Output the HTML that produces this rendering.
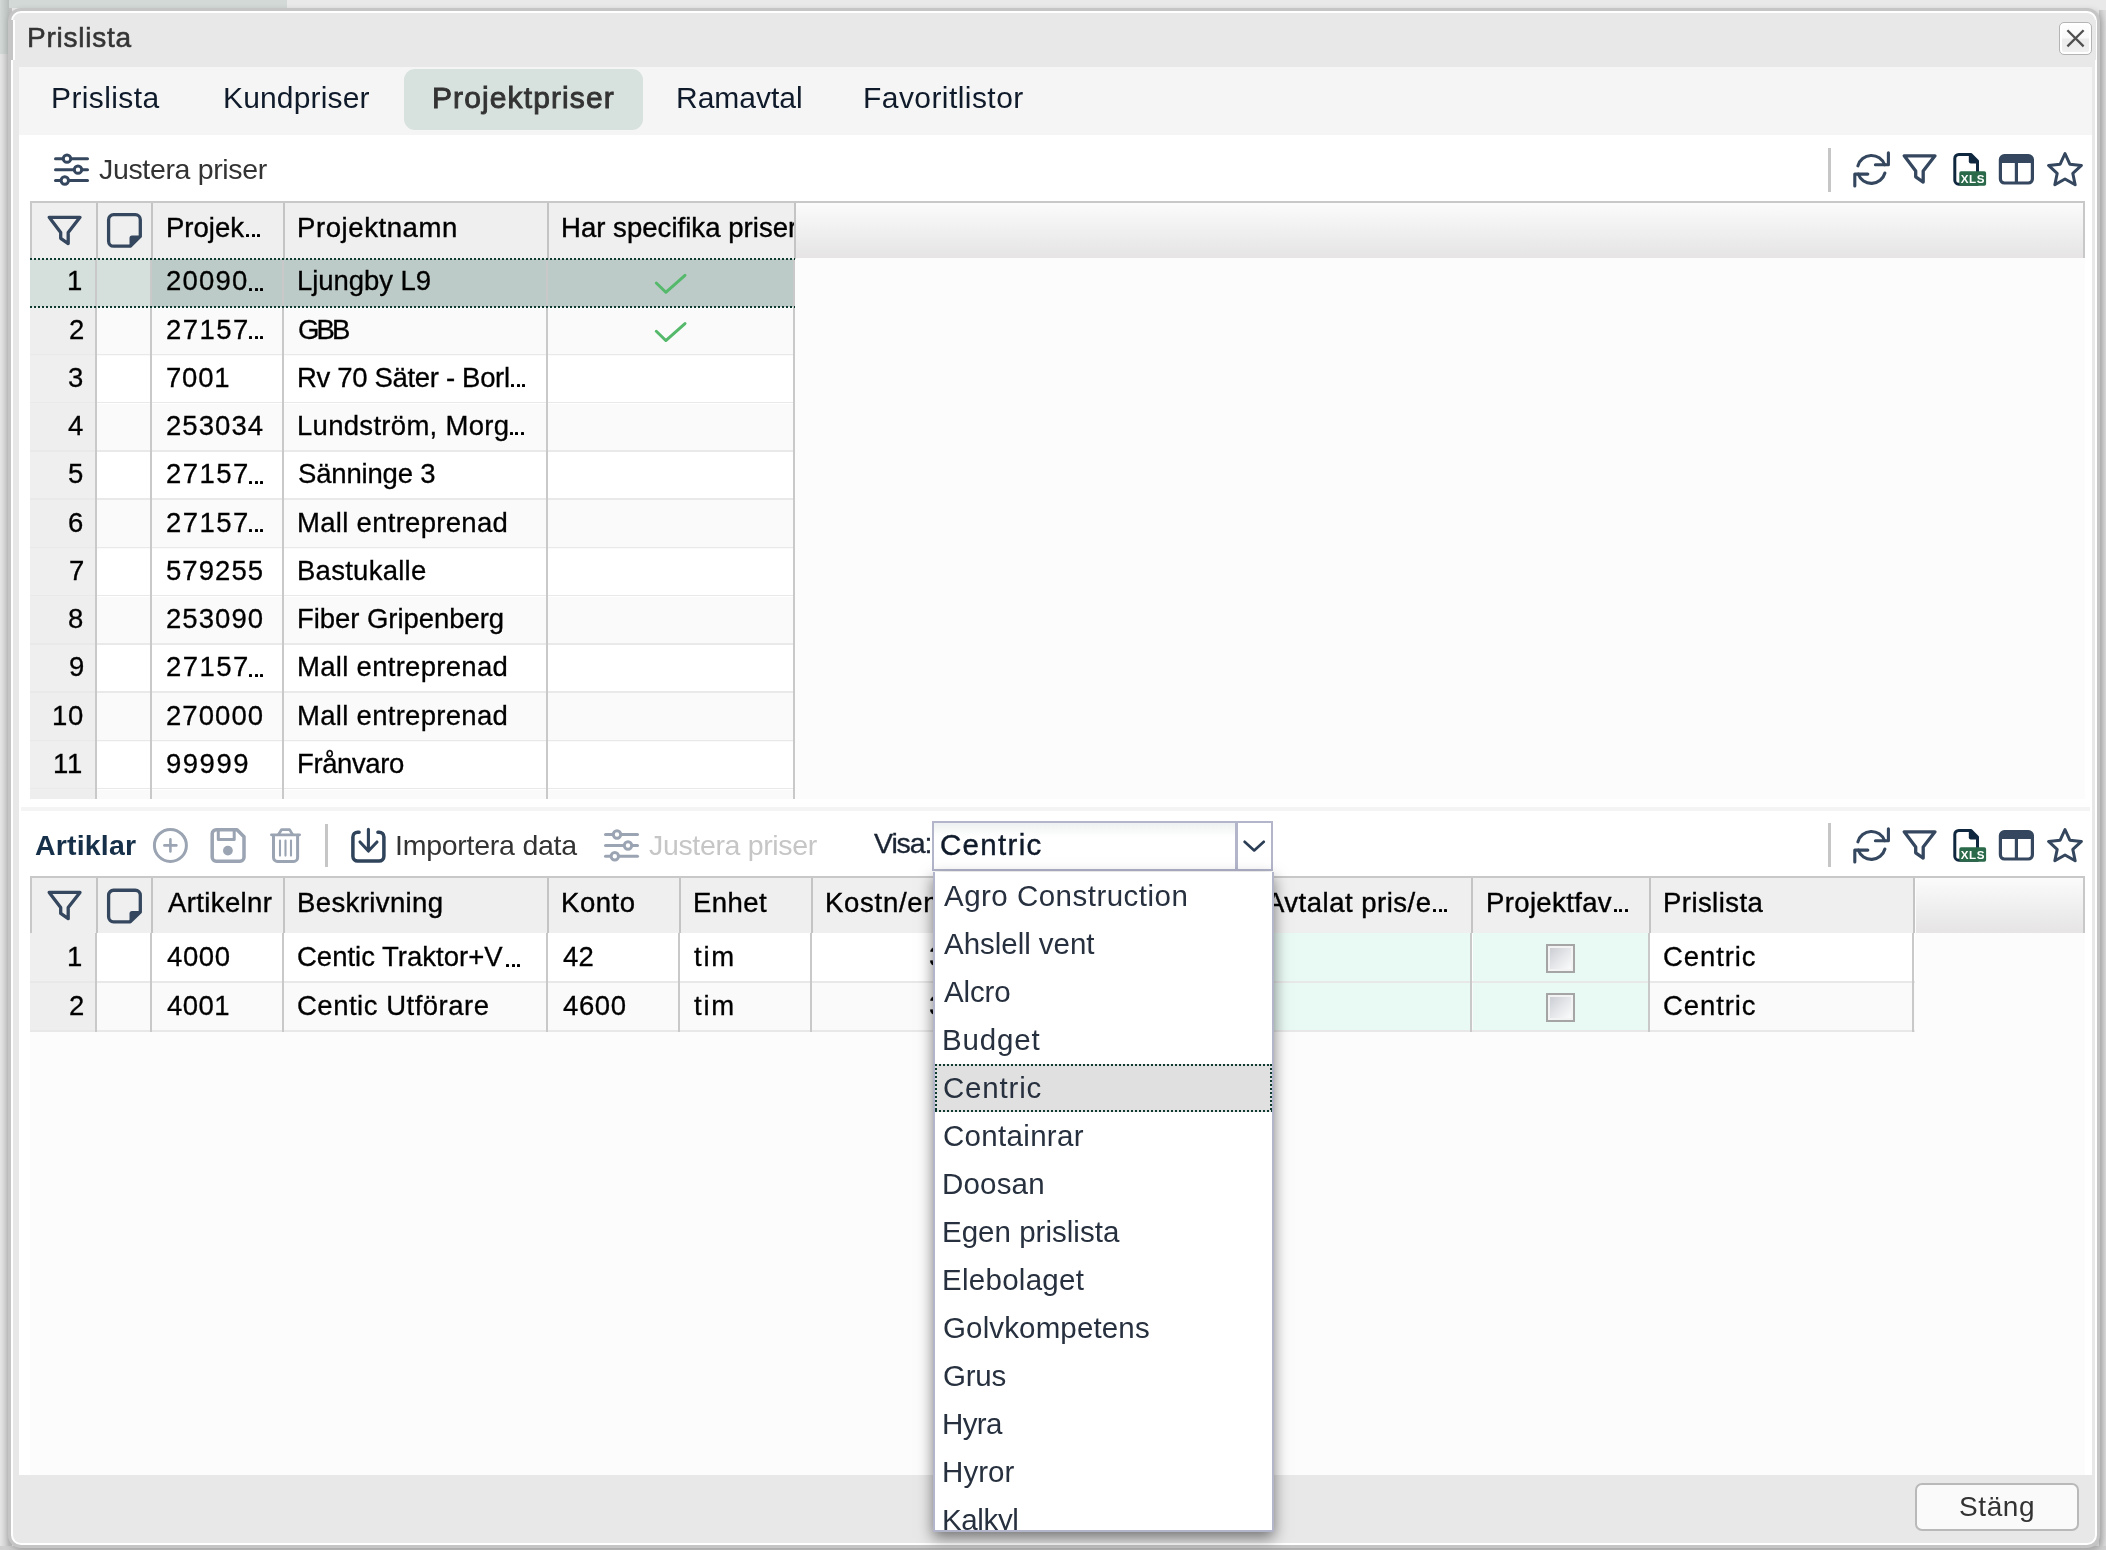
<!DOCTYPE html>
<html><head><meta charset="utf-8"><title>Prislista</title>
<style>
html,body{margin:0;padding:0}
body{width:2106px;height:1550px;position:relative;overflow:hidden;background:#e9e9e9;font-family:"Liberation Sans",sans-serif;}
.b{position:absolute;box-sizing:border-box}
.c{position:absolute;overflow:hidden}
.t{position:absolute;white-space:pre;font-family:"Liberation Sans",sans-serif;will-change:transform}
svg{position:absolute;left:0;top:0;overflow:visible}
</style></head><body>

<div class="b" style="left:0px;top:0px;width:287px;height:8px;background:#d3d9d7;"></div>
<div class="b" style="left:0px;top:8px;width:12px;height:1542px;background:linear-gradient(90deg,#e6e6e6 0%,#d2d2d2 45%,#bfbfbf 75%,#c4c4c4 100%);"></div>
<div class="b" style="left:0px;top:0px;width:9px;height:54px;background:linear-gradient(90deg,#d3d9d7,#b8bebc);"></div>
<div class="b" style="left:2099px;top:10px;width:7px;height:1538px;background:linear-gradient(90deg,#c8c8c8,#dedede);"></div>
<div class="b" style="left:0px;top:1546px;width:2106px;height:4px;background:#cfcfcf;"></div>
<div class="b" style="left:11px;top:11px;width:2086px;height:1534px;background:#e8e8e8;border:2px solid #fff;border-radius:10px;box-shadow:0 0 0 3px #c5c5c5,2px 3px 7px 3px rgba(0,0,0,.22);"></div>
<div class="b" style="left:19px;top:67px;width:2073px;height:1407.5px;background:#fff;"></div>
<div class="b" style="left:19px;top:67px;width:2073px;height:67.5px;background:#f5f5f5;"></div>
<div class="b" style="left:11px;top:20px;width:2px;height:40px;background:#c5c5c5;"></div>
<div class="b" style="left:13px;top:20px;width:2px;height:40px;background:#fff;"></div>
<div class="b" style="left:2095px;top:20px;width:1.2px;height:40px;background:#e8e8e8;"></div>
<div class="b" style="left:404px;top:69px;width:239px;height:61px;background:#d7e1de;border-radius:11px;"></div>
<span class="t" style="left:27.00px;top:24.20px;font-size:28px;line-height:28px;color:#333;letter-spacing:0.770px;-webkit-text-stroke:0.55px #333;">Prislista</span>
<div class="b" style="left:2059px;top:22px;width:33px;height:33px;background:linear-gradient(180deg,#fdfdfd 0%,#fafafa 48%,#ececec 52%,#f0f0f0 100%);border:1.5px solid #b4b4b4;border-radius:5px;box-shadow:inset 0 0 0 2px #fff;"></div>
<span class="t" style="left:51.00px;top:83.36px;font-size:30px;line-height:30px;color:#0f1a2a;letter-spacing:0.396px;">Prislista</span>
<span class="t" style="left:223.00px;top:83.36px;font-size:30px;line-height:30px;color:#0f1a2a;letter-spacing:0.157px;">Kundpriser</span>
<span class="t" style="left:431.75px;top:83.20px;font-size:30px;line-height:30px;color:#333;letter-spacing:1.113px;-webkit-text-stroke:0.9px #333;">Projektpriser</span>
<span class="t" style="left:676.00px;top:83.36px;font-size:30px;line-height:30px;color:#0f1a2a;letter-spacing:-0.006px;">Ramavtal</span>
<span class="t" style="left:862.75px;top:83.36px;font-size:30px;line-height:30px;color:#0f1a2a;letter-spacing:0.435px;">Favoritlistor</span>
<span class="t" style="left:98.75px;top:155.37px;font-size:28.5px;line-height:28.5px;color:#333;letter-spacing:-0.339px;">Justera priser</span>
<div class="b" style="left:1828px;top:148px;width:3px;height:43.5px;background:#c6c6c6;"></div>
<div class="b" style="left:30px;top:201px;width:2055px;height:598px;background:#fcfcfc;"></div>
<div class="b" style="left:30px;top:201px;width:2055px;height:2px;background:#c8c8c8;"></div>
<div class="b" style="left:30px;top:203px;width:2px;height:55px;background:#c8c8c8;"></div>
<div class="b" style="left:32px;top:203px;width:763px;height:55.5px;background:#efefef;"></div>
<div class="b" style="left:796px;top:203px;width:1287px;height:54.8px;background:linear-gradient(180deg,#fbfbfb 0%,#f1f1f1 45%,#e6e4e5 100%);"></div>
<div class="b" style="left:2083px;top:203px;width:2px;height:54.8px;background:#c8c8c8;"></div>
<div class="b" style="left:96px;top:203px;width:2px;height:56px;background:#c4c4c4;"></div>
<div class="b" style="left:151px;top:203px;width:2px;height:56px;background:#c4c4c4;"></div>
<div class="b" style="left:283px;top:203px;width:2px;height:56px;background:#c4c4c4;"></div>
<div class="b" style="left:547px;top:203px;width:2px;height:56px;background:#c4c4c4;"></div>
<div class="b" style="left:794px;top:203px;width:2px;height:56px;background:#c4c4c4;"></div>
<span class="t" style="left:165.50px;top:213.72px;font-size:27.5px;line-height:27.5px;color:#000;letter-spacing:0.000px;-webkit-text-stroke:0.4px #000;">Projek</span>
<div class="b" style="left:246.10px;top:233.90px;width:3px;height:3.1px;background:#000;border-radius:.6px"></div>
<div class="b" style="left:251.55px;top:233.90px;width:3px;height:3.1px;background:#000;border-radius:.6px"></div>
<div class="b" style="left:257.00px;top:233.90px;width:3px;height:3.1px;background:#000;border-radius:.6px"></div>
<span class="t" style="left:297.00px;top:213.72px;font-size:27.5px;line-height:27.5px;color:#000;letter-spacing:0.592px;-webkit-text-stroke:0.4px #000;">Projektnamn</span>
<div class="c" style="left:552.00px;top:207.72px;width:242.00px;height:39.50px"><span class="t" style="left:561.00px;top:213.72px;font-size:27.5px;line-height:27.5px;color:#000;letter-spacing:0.043px;-webkit-text-stroke:0.4px #000;left:9.00px;top:6px">Har specifika priser</span></div>
<div class="b" style="left:30px;top:259.0px;width:121px;height:48.25px;background:#d5e0dc;"></div>
<div class="b" style="left:151px;top:259.0px;width:644px;height:48.25px;background:#bccbc7;"></div>
<span class="t" style="left:66.60px;top:267.47px;font-size:27.5px;line-height:27.5px;color:#000;letter-spacing:0.000px;-webkit-text-stroke:0.3px #000;">1</span>
<span class="t" style="left:165.75px;top:267.47px;font-size:27.5px;line-height:27.5px;color:#000;letter-spacing:1.193px;-webkit-text-stroke:0.3px #000;">20090</span>
<div class="b" style="left:249.10px;top:287.65px;width:3px;height:3.1px;background:#000;border-radius:.6px"></div>
<div class="b" style="left:254.55px;top:287.65px;width:3px;height:3.1px;background:#000;border-radius:.6px"></div>
<div class="b" style="left:260.00px;top:287.65px;width:3px;height:3.1px;background:#000;border-radius:.6px"></div>
<span class="t" style="left:296.75px;top:267.47px;font-size:27.5px;line-height:27.5px;color:#000;letter-spacing:-0.057px;-webkit-text-stroke:0.3px #000;">Ljungby L9</span>
<div class="b" style="left:30px;top:307.25px;width:66px;height:48.25px;background:#eeeeee;"></div>
<div class="b" style="left:96px;top:307.25px;width:699px;height:48.25px;background:#fafafa;"></div>
<div class="b" style="left:30px;top:353.5px;width:765px;height:1.7px;background:#e9e9e9;"></div>
<span class="t" style="left:68.60px;top:315.72px;font-size:27.5px;line-height:27.5px;color:#000;letter-spacing:0.000px;-webkit-text-stroke:0.3px #000;">2</span>
<span class="t" style="left:165.75px;top:315.72px;font-size:27.5px;line-height:27.5px;color:#000;letter-spacing:1.443px;-webkit-text-stroke:0.3px #000;">27157</span>
<div class="b" style="left:249.10px;top:335.90px;width:3px;height:3.1px;background:#000;border-radius:.6px"></div>
<div class="b" style="left:254.55px;top:335.90px;width:3px;height:3.1px;background:#000;border-radius:.6px"></div>
<div class="b" style="left:260.00px;top:335.90px;width:3px;height:3.1px;background:#000;border-radius:.6px"></div>
<span class="t" style="left:297.75px;top:315.72px;font-size:27.5px;line-height:27.5px;color:#000;letter-spacing:-2.866px;-webkit-text-stroke:0.3px #000;">GBB</span>
<div class="b" style="left:30px;top:355.5px;width:66px;height:48.25px;background:#efefef;"></div>
<div class="b" style="left:96px;top:355.5px;width:699px;height:48.25px;background:#ffffff;"></div>
<div class="b" style="left:30px;top:401.75px;width:765px;height:1.7px;background:#e9e9e9;"></div>
<span class="t" style="left:67.60px;top:363.97px;font-size:27.5px;line-height:27.5px;color:#000;letter-spacing:0.000px;-webkit-text-stroke:0.3px #000;">3</span>
<span class="t" style="left:165.75px;top:363.97px;font-size:27.5px;line-height:27.5px;color:#000;letter-spacing:0.789px;-webkit-text-stroke:0.3px #000;">7001</span>
<span class="t" style="left:296.75px;top:363.97px;font-size:27.5px;line-height:27.5px;color:#000;letter-spacing:-0.323px;-webkit-text-stroke:0.3px #000;">Rv 70 Säter - Borl</span>
<div class="b" style="left:511.10px;top:384.15px;width:3px;height:3.1px;background:#000;border-radius:.6px"></div>
<div class="b" style="left:516.55px;top:384.15px;width:3px;height:3.1px;background:#000;border-radius:.6px"></div>
<div class="b" style="left:522.00px;top:384.15px;width:3px;height:3.1px;background:#000;border-radius:.6px"></div>
<div class="b" style="left:30px;top:403.75px;width:66px;height:48.25px;background:#eeeeee;"></div>
<div class="b" style="left:96px;top:403.75px;width:699px;height:48.25px;background:#fafafa;"></div>
<div class="b" style="left:30px;top:450.0px;width:765px;height:1.7px;background:#e9e9e9;"></div>
<span class="t" style="left:67.60px;top:412.22px;font-size:27.5px;line-height:27.5px;color:#000;letter-spacing:0.000px;-webkit-text-stroke:0.3px #000;">4</span>
<span class="t" style="left:165.75px;top:412.22px;font-size:27.5px;line-height:27.5px;color:#000;letter-spacing:1.056px;-webkit-text-stroke:0.3px #000;">253034</span>
<span class="t" style="left:296.75px;top:412.22px;font-size:27.5px;line-height:27.5px;color:#000;letter-spacing:0.295px;-webkit-text-stroke:0.3px #000;">Lundström, Morg</span>
<div class="b" style="left:509.85px;top:432.40px;width:3px;height:3.1px;background:#000;border-radius:.6px"></div>
<div class="b" style="left:515.30px;top:432.40px;width:3px;height:3.1px;background:#000;border-radius:.6px"></div>
<div class="b" style="left:520.75px;top:432.40px;width:3px;height:3.1px;background:#000;border-radius:.6px"></div>
<div class="b" style="left:30px;top:452.0px;width:66px;height:48.25px;background:#efefef;"></div>
<div class="b" style="left:96px;top:452.0px;width:699px;height:48.25px;background:#ffffff;"></div>
<div class="b" style="left:30px;top:498.25px;width:765px;height:1.7px;background:#e9e9e9;"></div>
<span class="t" style="left:67.60px;top:460.47px;font-size:27.5px;line-height:27.5px;color:#000;letter-spacing:0.000px;-webkit-text-stroke:0.3px #000;">5</span>
<span class="t" style="left:165.75px;top:460.47px;font-size:27.5px;line-height:27.5px;color:#000;letter-spacing:1.443px;-webkit-text-stroke:0.3px #000;">27157</span>
<div class="b" style="left:249.10px;top:480.65px;width:3px;height:3.1px;background:#000;border-radius:.6px"></div>
<div class="b" style="left:254.55px;top:480.65px;width:3px;height:3.1px;background:#000;border-radius:.6px"></div>
<div class="b" style="left:260.00px;top:480.65px;width:3px;height:3.1px;background:#000;border-radius:.6px"></div>
<span class="t" style="left:297.75px;top:460.47px;font-size:27.5px;line-height:27.5px;color:#000;letter-spacing:-0.179px;-webkit-text-stroke:0.3px #000;">Sänninge 3</span>
<div class="b" style="left:30px;top:500.25px;width:66px;height:48.25px;background:#eeeeee;"></div>
<div class="b" style="left:96px;top:500.25px;width:699px;height:48.25px;background:#fafafa;"></div>
<div class="b" style="left:30px;top:546.5px;width:765px;height:1.7px;background:#e9e9e9;"></div>
<span class="t" style="left:67.60px;top:508.72px;font-size:27.5px;line-height:27.5px;color:#000;letter-spacing:0.000px;-webkit-text-stroke:0.3px #000;">6</span>
<span class="t" style="left:165.75px;top:508.72px;font-size:27.5px;line-height:27.5px;color:#000;letter-spacing:1.443px;-webkit-text-stroke:0.3px #000;">27157</span>
<div class="b" style="left:249.10px;top:528.90px;width:3px;height:3.1px;background:#000;border-radius:.6px"></div>
<div class="b" style="left:254.55px;top:528.90px;width:3px;height:3.1px;background:#000;border-radius:.6px"></div>
<div class="b" style="left:260.00px;top:528.90px;width:3px;height:3.1px;background:#000;border-radius:.6px"></div>
<span class="t" style="left:296.75px;top:508.72px;font-size:27.5px;line-height:27.5px;color:#000;letter-spacing:0.295px;-webkit-text-stroke:0.3px #000;">Mall entreprenad</span>
<div class="b" style="left:30px;top:548.5px;width:66px;height:48.25px;background:#efefef;"></div>
<div class="b" style="left:96px;top:548.5px;width:699px;height:48.25px;background:#ffffff;"></div>
<div class="b" style="left:30px;top:594.75px;width:765px;height:1.7px;background:#e9e9e9;"></div>
<span class="t" style="left:68.60px;top:556.97px;font-size:27.5px;line-height:27.5px;color:#000;letter-spacing:0.000px;-webkit-text-stroke:0.3px #000;">7</span>
<span class="t" style="left:165.75px;top:556.97px;font-size:27.5px;line-height:27.5px;color:#000;letter-spacing:1.056px;-webkit-text-stroke:0.3px #000;">579255</span>
<span class="t" style="left:296.75px;top:556.97px;font-size:27.5px;line-height:27.5px;color:#000;letter-spacing:0.268px;-webkit-text-stroke:0.3px #000;">Bastukalle</span>
<div class="b" style="left:30px;top:596.75px;width:66px;height:48.25px;background:#eeeeee;"></div>
<div class="b" style="left:96px;top:596.75px;width:699px;height:48.25px;background:#fafafa;"></div>
<div class="b" style="left:30px;top:643.0px;width:765px;height:1.7px;background:#e9e9e9;"></div>
<span class="t" style="left:67.60px;top:605.22px;font-size:27.5px;line-height:27.5px;color:#000;letter-spacing:0.000px;-webkit-text-stroke:0.3px #000;">8</span>
<span class="t" style="left:165.75px;top:605.22px;font-size:27.5px;line-height:27.5px;color:#000;letter-spacing:1.056px;-webkit-text-stroke:0.3px #000;">253090</span>
<span class="t" style="left:296.75px;top:605.22px;font-size:27.5px;line-height:27.5px;color:#000;letter-spacing:-0.055px;-webkit-text-stroke:0.3px #000;">Fiber Gripenberg</span>
<div class="b" style="left:30px;top:645.0px;width:66px;height:48.25px;background:#efefef;"></div>
<div class="b" style="left:96px;top:645.0px;width:699px;height:48.25px;background:#ffffff;"></div>
<div class="b" style="left:30px;top:691.25px;width:765px;height:1.7px;background:#e9e9e9;"></div>
<span class="t" style="left:68.60px;top:653.47px;font-size:27.5px;line-height:27.5px;color:#000;letter-spacing:0.000px;-webkit-text-stroke:0.3px #000;">9</span>
<span class="t" style="left:165.75px;top:653.47px;font-size:27.5px;line-height:27.5px;color:#000;letter-spacing:1.443px;-webkit-text-stroke:0.3px #000;">27157</span>
<div class="b" style="left:249.10px;top:673.65px;width:3px;height:3.1px;background:#000;border-radius:.6px"></div>
<div class="b" style="left:254.55px;top:673.65px;width:3px;height:3.1px;background:#000;border-radius:.6px"></div>
<div class="b" style="left:260.00px;top:673.65px;width:3px;height:3.1px;background:#000;border-radius:.6px"></div>
<span class="t" style="left:296.75px;top:653.47px;font-size:27.5px;line-height:27.5px;color:#000;letter-spacing:0.295px;-webkit-text-stroke:0.3px #000;">Mall entreprenad</span>
<div class="b" style="left:30px;top:693.25px;width:66px;height:48.25px;background:#eeeeee;"></div>
<div class="b" style="left:96px;top:693.25px;width:699px;height:48.25px;background:#fafafa;"></div>
<div class="b" style="left:30px;top:739.5px;width:765px;height:1.7px;background:#e9e9e9;"></div>
<span class="t" style="left:51.61px;top:701.72px;font-size:27.5px;line-height:27.5px;color:#000;letter-spacing:0.700px;-webkit-text-stroke:0.3px #000;">10</span>
<span class="t" style="left:165.75px;top:701.72px;font-size:27.5px;line-height:27.5px;color:#000;letter-spacing:1.056px;-webkit-text-stroke:0.3px #000;">270000</span>
<span class="t" style="left:296.75px;top:701.72px;font-size:27.5px;line-height:27.5px;color:#000;letter-spacing:0.295px;-webkit-text-stroke:0.3px #000;">Mall entreprenad</span>
<div class="b" style="left:30px;top:741.5px;width:66px;height:48.25px;background:#efefef;"></div>
<div class="b" style="left:96px;top:741.5px;width:699px;height:48.25px;background:#ffffff;"></div>
<div class="b" style="left:30px;top:787.75px;width:765px;height:1.7px;background:#e9e9e9;"></div>
<span class="t" style="left:52.65px;top:749.97px;font-size:27.5px;line-height:27.5px;color:#000;letter-spacing:0.700px;-webkit-text-stroke:0.3px #000;">11</span>
<span class="t" style="left:165.75px;top:749.97px;font-size:27.5px;line-height:27.5px;color:#000;letter-spacing:1.518px;-webkit-text-stroke:0.3px #000;">99999</span>
<span class="t" style="left:296.75px;top:749.97px;font-size:27.5px;line-height:27.5px;color:#000;letter-spacing:-0.392px;-webkit-text-stroke:0.3px #000;">Frånvaro</span>
<div class="b" style="left:30px;top:789.75px;width:66px;height:9.25px;background:#eeeeee;"></div>
<div class="b" style="left:96px;top:789.75px;width:699px;height:9.25px;background:#fafafa;"></div>
<div class="b" style="left:95px;top:260px;width:2px;height:539px;background:#c9c9c9;"></div>
<div class="b" style="left:150px;top:260px;width:2px;height:539px;background:#c9c9c9;"></div>
<div class="b" style="left:282px;top:260px;width:2px;height:539px;background:#c9c9c9;"></div>
<div class="b" style="left:546px;top:260px;width:2px;height:539px;background:#c9c9c9;"></div>
<div class="b" style="left:793px;top:260px;width:2px;height:539px;background:#c9c9c9;"></div>
<div class="b" style="left:30px;top:258px;width:765px;height:2px;background:repeating-linear-gradient(90deg,#0f3a30 0,#0f3a30 2px,transparent 2px,transparent 4px);"></div>
<div class="b" style="left:30px;top:306px;width:765px;height:2px;background:repeating-linear-gradient(90deg,#0f3a30 0,#0f3a30 2px,transparent 2px,transparent 4px);"></div>
<div class="b" style="left:21px;top:806.5px;width:2069px;height:4px;background:#f4f4f4;"></div>
<span class="t" style="left:35.00px;top:831.37px;font-size:28.5px;line-height:28.5px;color:#16304a;letter-spacing:0.186px;font-weight:bold;">Artiklar</span>
<div class="b" style="left:325px;top:823.5px;width:3px;height:43.5px;background:#c6c6c6;"></div>
<span class="t" style="left:395.00px;top:830.87px;font-size:28.5px;line-height:28.5px;color:#333;letter-spacing:-0.250px;">Importera data</span>
<span class="t" style="left:648.50px;top:830.87px;font-size:28.5px;line-height:28.5px;color:#c6c6c6;letter-spacing:-0.339px;">Justera priser</span>
<span class="t" style="left:874.00px;top:829.37px;font-size:28.5px;line-height:28.5px;color:#1a2433;letter-spacing:-1.107px;-webkit-text-stroke:0.35px #1a2433;">Visa:</span>
<div class="b" style="left:1828px;top:823px;width:3px;height:43.5px;background:#c6c6c6;"></div>
<div class="b" style="left:30px;top:876px;width:2055px;height:598.5px;background:#fcfcfc;"></div>
<div class="b" style="left:30px;top:876px;width:2055px;height:2px;background:#c8c8c8;"></div>
<div class="b" style="left:30px;top:878px;width:2px;height:55px;background:#c8c8c8;"></div>
<div class="b" style="left:32px;top:878px;width:1882px;height:55px;background:#efefef;"></div>
<div class="b" style="left:1915.5px;top:878px;width:169.5px;height:55px;background:linear-gradient(180deg,#fbfbfb 0%,#f1f1f1 45%,#e6e4e5 100%);"></div>
<div class="b" style="left:2083px;top:878px;width:2px;height:55px;background:#c8c8c8;"></div>
<div class="b" style="left:96px;top:878px;width:2px;height:55px;background:#c4c4c4;"></div>
<div class="b" style="left:151px;top:878px;width:2px;height:55px;background:#c4c4c4;"></div>
<div class="b" style="left:283px;top:878px;width:2px;height:55px;background:#c4c4c4;"></div>
<div class="b" style="left:547px;top:878px;width:2px;height:55px;background:#c4c4c4;"></div>
<div class="b" style="left:679px;top:878px;width:2px;height:55px;background:#c4c4c4;"></div>
<div class="b" style="left:811px;top:878px;width:2px;height:55px;background:#c4c4c4;"></div>
<div class="b" style="left:1471px;top:878px;width:2px;height:55px;background:#c4c4c4;"></div>
<div class="b" style="left:1649px;top:878px;width:2px;height:55px;background:#c4c4c4;"></div>
<div class="b" style="left:1913px;top:878px;width:2px;height:55px;background:#c4c4c4;"></div>
<span class="t" style="left:167.50px;top:888.72px;font-size:27.5px;line-height:27.5px;color:#000;letter-spacing:0.382px;-webkit-text-stroke:0.4px #000;">Artikelnr</span>
<span class="t" style="left:297.25px;top:888.72px;font-size:27.5px;line-height:27.5px;color:#000;letter-spacing:0.390px;-webkit-text-stroke:0.4px #000;">Beskrivning</span>
<span class="t" style="left:561.00px;top:888.72px;font-size:27.5px;line-height:27.5px;color:#000;letter-spacing:0.545px;-webkit-text-stroke:0.4px #000;">Konto</span>
<span class="t" style="left:693.25px;top:888.72px;font-size:27.5px;line-height:27.5px;color:#000;letter-spacing:0.444px;-webkit-text-stroke:0.4px #000;">Enhet</span>
<span class="t" style="left:825.25px;top:888.72px;font-size:27.5px;line-height:27.5px;color:#000;letter-spacing:0.713px;-webkit-text-stroke:0.4px #000;">Kostn/en</span>
<span class="t" style="left:1266.00px;top:888.72px;font-size:27.5px;line-height:27.5px;color:#000;letter-spacing:0.503px;-webkit-text-stroke:0.4px #000;">Avtalat pris/e</span>
<div class="b" style="left:1433.10px;top:908.90px;width:3px;height:3.1px;background:#000;border-radius:.6px"></div>
<div class="b" style="left:1438.55px;top:908.90px;width:3px;height:3.1px;background:#000;border-radius:.6px"></div>
<div class="b" style="left:1444.00px;top:908.90px;width:3px;height:3.1px;background:#000;border-radius:.6px"></div>
<span class="t" style="left:1485.50px;top:888.72px;font-size:27.5px;line-height:27.5px;color:#000;letter-spacing:0.364px;-webkit-text-stroke:0.4px #000;">Projektfav</span>
<div class="b" style="left:1613.70px;top:908.90px;width:3px;height:3.1px;background:#000;border-radius:.6px"></div>
<div class="b" style="left:1619.15px;top:908.90px;width:3px;height:3.1px;background:#000;border-radius:.6px"></div>
<div class="b" style="left:1624.60px;top:908.90px;width:3px;height:3.1px;background:#000;border-radius:.6px"></div>
<span class="t" style="left:1663.00px;top:888.72px;font-size:27.5px;line-height:27.5px;color:#000;letter-spacing:0.441px;-webkit-text-stroke:0.4px #000;">Prislista</span>
<div class="b" style="left:30px;top:933.0px;width:66px;height:48.25px;background:#efefef;"></div>
<div class="b" style="left:96px;top:933.0px;width:1819px;height:48.25px;background:#ffffff;"></div>
<div class="b" style="left:943px;top:933.0px;width:528.6px;height:48.25px;background:#e9f9f3;"></div>
<div class="b" style="left:1473.4px;top:933.0px;width:176px;height:48.25px;background:#e9f9f3;"></div>
<span class="t" style="left:66.60px;top:943.47px;font-size:27.5px;line-height:27.5px;color:#000;letter-spacing:0.000px;-webkit-text-stroke:0.3px #000;">1</span>
<span class="t" style="left:166.75px;top:943.47px;font-size:27.5px;line-height:27.5px;color:#000;letter-spacing:0.622px;-webkit-text-stroke:0.3px #000;">4000</span>
<span class="t" style="left:297.00px;top:943.47px;font-size:27.5px;line-height:27.5px;color:#000;letter-spacing:-0.001px;-webkit-text-stroke:0.3px #000;">Centic Traktor+V</span>
<div class="b" style="left:506.10px;top:963.65px;width:3px;height:3.1px;background:#000;border-radius:.6px"></div>
<div class="b" style="left:511.55px;top:963.65px;width:3px;height:3.1px;background:#000;border-radius:.6px"></div>
<div class="b" style="left:517.00px;top:963.65px;width:3px;height:3.1px;background:#000;border-radius:.6px"></div>
<span class="t" style="left:563.00px;top:943.47px;font-size:27.5px;line-height:27.5px;color:#000;letter-spacing:0.306px;-webkit-text-stroke:0.3px #000;">42</span>
<span class="t" style="left:694.20px;top:943.47px;font-size:27.5px;line-height:27.5px;color:#000;letter-spacing:1.775px;-webkit-text-stroke:0.3px #000;">tim</span>
<span class="t" style="left:928.80px;top:943.47px;font-size:27.5px;line-height:27.5px;color:#000;letter-spacing:0.000px;-webkit-text-stroke:0.3px #000;">3</span>
<span class="t" style="left:1662.75px;top:943.47px;font-size:27.5px;line-height:27.5px;color:#000;letter-spacing:0.899px;-webkit-text-stroke:0.3px #000;">Centric</span>
<div class="b" style="left:1546.25px;top:944.25px;width:29px;height:29px;background:linear-gradient(135deg,#c6c9cf 0%,#e4e6e9 50%,#ffffff 100%);border:2px solid #a5a5a5;box-shadow:inset 0 0 0 2px #f3f3f3;"></div>
<div class="b" style="left:30px;top:981.25px;width:66px;height:48.25px;background:#eeeeee;"></div>
<div class="b" style="left:96px;top:981.25px;width:1819px;height:48.25px;background:#fafafa;"></div>
<div class="b" style="left:943px;top:981.25px;width:528.6px;height:48.25px;background:#e9f9f3;"></div>
<div class="b" style="left:1473.4px;top:981.25px;width:176px;height:48.25px;background:#e9f9f3;"></div>
<span class="t" style="left:68.60px;top:991.72px;font-size:27.5px;line-height:27.5px;color:#000;letter-spacing:0.000px;-webkit-text-stroke:0.3px #000;">2</span>
<span class="t" style="left:166.75px;top:991.72px;font-size:27.5px;line-height:27.5px;color:#000;letter-spacing:0.456px;-webkit-text-stroke:0.3px #000;">4001</span>
<span class="t" style="left:297.00px;top:991.72px;font-size:27.5px;line-height:27.5px;color:#000;letter-spacing:0.508px;-webkit-text-stroke:0.3px #000;">Centic Utförare</span>
<span class="t" style="left:563.00px;top:991.72px;font-size:27.5px;line-height:27.5px;color:#000;letter-spacing:0.639px;-webkit-text-stroke:0.3px #000;">4600</span>
<span class="t" style="left:694.20px;top:991.72px;font-size:27.5px;line-height:27.5px;color:#000;letter-spacing:1.775px;-webkit-text-stroke:0.3px #000;">tim</span>
<span class="t" style="left:928.80px;top:991.72px;font-size:27.5px;line-height:27.5px;color:#000;letter-spacing:0.000px;-webkit-text-stroke:0.3px #000;">3</span>
<span class="t" style="left:1662.75px;top:991.72px;font-size:27.5px;line-height:27.5px;color:#000;letter-spacing:0.899px;-webkit-text-stroke:0.3px #000;">Centric</span>
<div class="b" style="left:1546.25px;top:992.5px;width:29px;height:29px;background:linear-gradient(135deg,#c6c9cf 0%,#e4e6e9 50%,#ffffff 100%);border:2px solid #a5a5a5;box-shadow:inset 0 0 0 2px #f3f3f3;"></div>
<div class="b" style="left:30px;top:981px;width:1885px;height:1.5px;background:#e8e8e8;"></div>
<div class="b" style="left:30px;top:1029.6px;width:1885px;height:2.2px;background:#e8e8e8;"></div>
<div class="b" style="left:95px;top:933px;width:2px;height:98.5px;background:#c9c9c9;"></div>
<div class="b" style="left:150px;top:933px;width:2px;height:98.5px;background:#c9c9c9;"></div>
<div class="b" style="left:282px;top:933px;width:2px;height:98.5px;background:#c9c9c9;"></div>
<div class="b" style="left:546px;top:933px;width:2px;height:98.5px;background:#c9c9c9;"></div>
<div class="b" style="left:678px;top:933px;width:2px;height:98.5px;background:#c9c9c9;"></div>
<div class="b" style="left:810px;top:933px;width:2px;height:98.5px;background:#c9c9c9;"></div>
<div class="b" style="left:1470px;top:933px;width:2px;height:98.5px;background:#c9c9c9;"></div>
<div class="b" style="left:1648px;top:933px;width:2px;height:98.5px;background:#c9c9c9;"></div>
<div class="b" style="left:1912px;top:933px;width:2px;height:98.5px;background:#c9c9c9;"></div>
<div class="b" style="left:932px;top:821px;width:340.6px;height:50px;background:#fff;border:2px solid #b3b5cb;"></div>
<div class="b" style="left:934px;top:823px;width:300.5px;height:14px;background:linear-gradient(180deg,#eef1f1,#ffffff);"></div>
<div class="b" style="left:1234.5px;top:823px;width:3.5px;height:46px;background:#b3b5cb;"></div>
<span class="t" style="left:940.00px;top:830.03px;font-size:29.5px;line-height:29.5px;color:#0f1a2a;letter-spacing:1.302px;-webkit-text-stroke:0.4px #0f1a2a;">Centric</span>
<div class="b" style="left:1914.5px;top:1483.3px;width:164.5px;height:47.5px;background:#fafafa;border:2px solid #b9b9b9;border-radius:7px;"></div>
<span class="t" style="left:1958.60px;top:1493.30px;font-size:28px;line-height:28px;color:#333;letter-spacing:0.600px;">Stäng</span>
<div class="b" style="left:933px;top:872px;width:341px;height:659.7px;background:#fff;border:2px solid #b3b5cb;border-top:none;box-shadow:0 6px 14px rgba(0,0,0,.5);"></div>
<div class="b" style="left:935px;top:1064.2px;width:337px;height:47.8px;background:#e0e0e0;"></div>
<div class="b" style="left:935px;top:1064.2px;width:337px;height:2px;background:repeating-linear-gradient(90deg,#0f3a30 0,#0f3a30 2px,transparent 2px,transparent 4px);"></div>
<div class="b" style="left:935px;top:1110px;width:337px;height:2px;background:repeating-linear-gradient(90deg,#0f3a30 0,#0f3a30 2px,transparent 2px,transparent 4px);"></div>
<div class="b" style="left:935px;top:1064.2px;width:2px;height:47.8px;background:repeating-linear-gradient(180deg,#0f3a30 0,#0f3a30 2px,transparent 2px,transparent 4px);"></div>
<div class="b" style="left:1270px;top:1064.2px;width:2px;height:47.8px;background:repeating-linear-gradient(180deg,#0f3a30 0,#0f3a30 2px,transparent 2px,transparent 4px);"></div>
<span class="t" style="left:943.70px;top:881.28px;font-size:29.5px;line-height:29.5px;color:#27303e;letter-spacing:0.481px;">Agro Construction</span>
<span class="t" style="left:943.70px;top:929.28px;font-size:29.5px;line-height:29.5px;color:#27303e;letter-spacing:-0.033px;">Ahslell vent</span>
<span class="t" style="left:943.70px;top:977.28px;font-size:29.5px;line-height:29.5px;color:#27303e;letter-spacing:-0.126px;">Alcro</span>
<span class="t" style="left:941.70px;top:1025.28px;font-size:29.5px;line-height:29.5px;color:#27303e;letter-spacing:0.820px;">Budget</span>
<span class="t" style="left:942.70px;top:1073.28px;font-size:29.5px;line-height:29.5px;color:#27303e;letter-spacing:0.802px;">Centric</span>
<span class="t" style="left:942.70px;top:1121.28px;font-size:29.5px;line-height:29.5px;color:#27303e;letter-spacing:0.310px;">Containrar</span>
<span class="t" style="left:941.70px;top:1169.28px;font-size:29.5px;line-height:29.5px;color:#27303e;letter-spacing:0.185px;">Doosan</span>
<span class="t" style="left:941.70px;top:1217.28px;font-size:29.5px;line-height:29.5px;color:#27303e;letter-spacing:0.017px;">Egen prislista</span>
<span class="t" style="left:941.70px;top:1265.28px;font-size:29.5px;line-height:29.5px;color:#27303e;letter-spacing:0.275px;">Elebolaget</span>
<span class="t" style="left:942.70px;top:1313.28px;font-size:29.5px;line-height:29.5px;color:#27303e;letter-spacing:0.141px;">Golvkompetens</span>
<span class="t" style="left:942.70px;top:1361.28px;font-size:29.5px;line-height:29.5px;color:#27303e;letter-spacing:-0.259px;">Grus</span>
<span class="t" style="left:941.70px;top:1409.28px;font-size:29.5px;line-height:29.5px;color:#27303e;letter-spacing:-0.626px;">Hyra</span>
<span class="t" style="left:941.70px;top:1457.28px;font-size:29.5px;line-height:29.5px;color:#27303e;letter-spacing:0.079px;">Hyror</span>
<div class="c" style="left:935px;top:1500px;width:337px;height:29.7px">
<span class="t" style="left:6.70px;top:5.03px;font-size:29.5px;line-height:29.5px;color:#27303e;letter-spacing:-0.367px">Kalkyl</span></div>
<svg width="2106" height="1550" viewBox="0 0 2106 1550"><g transform="translate(1853.8,151.8)" fill="none" stroke="#34475e" stroke-width="3.1" stroke-linecap="round" stroke-linejoin="round"><path d="M4.1 14A14 14 0 0 1 30.8 12.9"/><path d="M34.6 1V12.9H21.6"/><path d="M31.1 21.2A14 14 0 0 1 4.4 22.3"/><path d="M1 34.1V22.3H14"/></g><path transform="translate(1902.4,154)" d="M1.8 1.8H32.6L20.8 17V28.1L13.3 22.8V17Z" fill="none" stroke="#34475e" stroke-width="3.3" stroke-linejoin="round"/><g transform="translate(1953.3,152.8)"><path d="M5.5 1.6H17.5L24.2 8.3V31.4H5.5a4 4 0 0 1-4-4V5.6a4 4 0 0 1 4-4Z" fill="none" stroke="#10283f" stroke-width="3" stroke-linejoin="round"/><path d="M15.5 1.2H18L24.8 8V10.8H17.5a2 2 0 0 1-2-2Z" fill="#10283f"/><rect x="6" y="18.4" width="26.8" height="14.6" rx="1.8" fill="#2a6a4a"/><text x="19.6" y="30" text-anchor="middle" font-family="Liberation Sans,sans-serif" font-weight="bold" font-size="11.6" fill="#fff" letter-spacing="0.5">XLS</text></g><g transform="translate(1998.8,154)"><rect x="1.6" y="1.6" width="32" height="27.4" rx="4" fill="none" stroke="#34475e" stroke-width="3.2"/><path d="M1.6 9V5.6a4 4 0 0 1 4-4H29.6a4 4 0 0 1 4 4V9Z" fill="#34475e"/><line x1="17.6" y1="8" x2="17.6" y2="29" stroke="#34475e" stroke-width="3.2"/></g><polygon transform="translate(2046.7,151.2)" points="18.30,2.30 23.12,12.97 34.75,14.25 26.10,22.13 28.47,33.60 18.30,27.80 8.13,33.60 10.50,22.13 1.85,14.25 13.48,12.97" fill="none" stroke="#34475e" stroke-width="3" stroke-linejoin="round"/><g transform="translate(1853.8,827.8)" fill="none" stroke="#34475e" stroke-width="3.1" stroke-linecap="round" stroke-linejoin="round"><path d="M4.1 14A14 14 0 0 1 30.8 12.9"/><path d="M34.6 1V12.9H21.6"/><path d="M31.1 21.2A14 14 0 0 1 4.4 22.3"/><path d="M1 34.1V22.3H14"/></g><path transform="translate(1902.4,830)" d="M1.8 1.8H32.6L20.8 17V28.1L13.3 22.8V17Z" fill="none" stroke="#34475e" stroke-width="3.3" stroke-linejoin="round"/><g transform="translate(1953.3,828.8)"><path d="M5.5 1.6H17.5L24.2 8.3V31.4H5.5a4 4 0 0 1-4-4V5.6a4 4 0 0 1 4-4Z" fill="none" stroke="#10283f" stroke-width="3" stroke-linejoin="round"/><path d="M15.5 1.2H18L24.8 8V10.8H17.5a2 2 0 0 1-2-2Z" fill="#10283f"/><rect x="6" y="18.4" width="26.8" height="14.6" rx="1.8" fill="#2a6a4a"/><text x="19.6" y="30" text-anchor="middle" font-family="Liberation Sans,sans-serif" font-weight="bold" font-size="11.6" fill="#fff" letter-spacing="0.5">XLS</text></g><g transform="translate(1998.8,830)"><rect x="1.6" y="1.6" width="32" height="27.4" rx="4" fill="none" stroke="#34475e" stroke-width="3.2"/><path d="M1.6 9V5.6a4 4 0 0 1 4-4H29.6a4 4 0 0 1 4 4V9Z" fill="#34475e"/><line x1="17.6" y1="8" x2="17.6" y2="29" stroke="#34475e" stroke-width="3.2"/></g><polygon transform="translate(2046.7,827.2)" points="18.30,2.30 23.12,12.97 34.75,14.25 26.10,22.13 28.47,33.60 18.30,27.80 8.13,33.60 10.50,22.13 1.85,14.25 13.48,12.97" fill="none" stroke="#34475e" stroke-width="3" stroke-linejoin="round"/><g transform="translate(54,153.75)" stroke="#34475e" stroke-width="3" stroke-linecap="round" fill="#fff"><line x1="1.5" y1="4.9" x2="33.5" y2="4.9"/><line x1="1.5" y1="15.9" x2="33.5" y2="15.9"/><line x1="1.5" y1="26.7" x2="33.5" y2="26.7"/><circle cx="13" cy="4.9" r="3.7"/><circle cx="24" cy="15.9" r="3.7"/><circle cx="10.8" cy="26.7" r="3.7"/></g><g transform="translate(604,829.6)" stroke="#9ba4b2" stroke-width="3" stroke-linecap="round" fill="#fff"><line x1="1.5" y1="4.9" x2="33.5" y2="4.9"/><line x1="1.5" y1="15.9" x2="33.5" y2="15.9"/><line x1="1.5" y1="26.7" x2="33.5" y2="26.7"/><circle cx="13" cy="4.9" r="3.7"/><circle cx="24" cy="15.9" r="3.7"/><circle cx="10.8" cy="26.7" r="3.7"/></g><path transform="translate(47.4,215.5)" d="M1.8 1.8H32.6L20.8 17V28.1L13.3 22.8V17Z" fill="none" stroke="#34475e" stroke-width="3.3" stroke-linejoin="round"/><g transform="translate(107,213)"><path d="M6.6 1.65H28.3a5 5 0 0 1 5 5V23.4L23.2 33.2H6.6a5 5 0 0 1-5-5V6.65a5 5 0 0 1 5-5Z" fill="none" stroke="#34475e" stroke-width="3.3" stroke-linejoin="round"/><path d="M22.5 25a2.5 2.5 0 0 1 2.5-2.5H33.5V23.8L23.6 33.5H22.5Z" fill="#34475e"/></g><path transform="translate(47.4,890.6)" d="M1.8 1.8H32.6L20.8 17V28.1L13.3 22.8V17Z" fill="none" stroke="#34475e" stroke-width="3.3" stroke-linejoin="round"/><g transform="translate(107,888.6)"><path d="M6.6 1.65H28.3a5 5 0 0 1 5 5V23.4L23.2 33.2H6.6a5 5 0 0 1-5-5V6.65a5 5 0 0 1 5-5Z" fill="none" stroke="#34475e" stroke-width="3.3" stroke-linejoin="round"/><path d="M22.5 25a2.5 2.5 0 0 1 2.5-2.5H33.5V23.8L23.6 33.5H22.5Z" fill="#34475e"/></g><path d="M656.3 283L665.8 292.3L685 275.3" fill="none" stroke="#55b96c" stroke-width="3" stroke-linecap="round" stroke-linejoin="round"/><path d="M656.3 331.25L665.8 340.55L685 323.55" fill="none" stroke="#55b96c" stroke-width="3" stroke-linecap="round" stroke-linejoin="round"/><g fill="none" stroke="#9ba4b2" stroke-linecap="round"><circle cx="170.4" cy="845.4" r="16" stroke-width="3"/><path d="M164.4 845.4H176.4M170.4 839.4V851.4" stroke-width="2.6"/></g><g transform="translate(210.4,828)" fill="none" stroke="#9ba4b2" stroke-linejoin="round"><path d="M5.8 1.8H26.6L33.6 8.8V29.2a4 4 0 0 1-4 4H5.8a4 4 0 0 1-4-4V5.8a4 4 0 0 1 4-4Z" stroke-width="3.5"/><path d="M7.9 2V11.6H23.8V2" stroke-width="3"/><circle cx="17.5" cy="22.6" r="4.9" fill="#9ba4b2" stroke="none"/></g><g transform="translate(270.2,828)" fill="none" stroke="#9ba4b2" stroke-linecap="round" stroke-linejoin="round"><path d="M1.2 6.8H29.4" stroke-width="2.8"/><path d="M8.3 6.6L11.4 1.6H19.4L22.4 6.6" stroke-width="2.8"/><path d="M3.3 7.2V29.4a4 4 0 0 0 4 4H23.4a4 4 0 0 0 4-4V7.2" stroke-width="3"/><path d="M9.8 12.6V27.6M15.3 12.6V27.6M20.8 12.6V27.6" stroke-width="2.1"/></g><g transform="translate(351.1,828)" fill="none" stroke="#2f435b" stroke-linecap="round" stroke-linejoin="round"><path d="M8 4.2H6.6a4.8 4.8 0 0 0-4.8 4.8V28.3a4.8 4.8 0 0 0 4.8 4.8H28a4.8 4.8 0 0 0 4.8-4.8V9a4.8 4.8 0 0 0-4.8-4.8H26.8" stroke-width="3.5"/><path d="M17.3 1.2V22.6M8.9 14L17.3 23L25.9 14" stroke-width="3.1"/></g><path d="M1244.6 841.8L1254.2 850.4L1263.8 841.8" fill="none" stroke="#2c3e55" stroke-width="2.7" stroke-linecap="round" stroke-linejoin="round"/><path d="M2067.4 30.2L2083.6 46.4M2083.6 30.2L2067.4 46.4" fill="none" stroke="#505050" stroke-width="2.3"/></svg>
</body></html>
